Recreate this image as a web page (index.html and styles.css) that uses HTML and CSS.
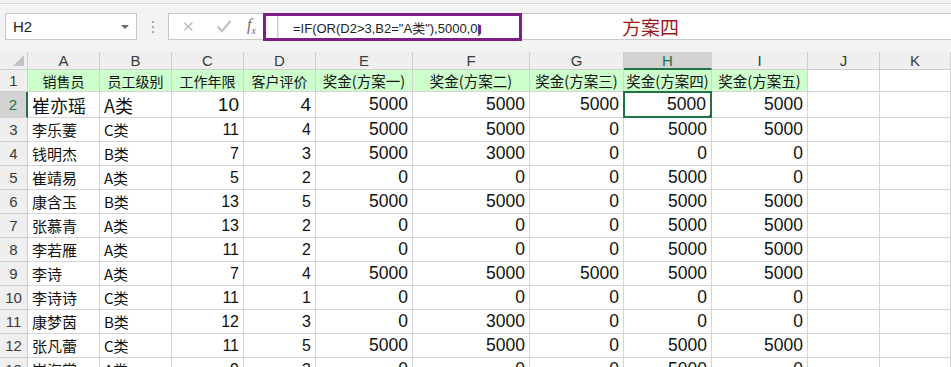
FILE: index.html
```html
<!DOCTYPE html>
<html lang="zh-CN">

<head>
	<meta charset="UTF-8">
	<title>奖金方案</title>
	<link rel="stylesheet" href="styles.css">
</head>

<body>

	<div class="toolbar">
		<div class="name-box">
			<span>H2</span>
			<i class="drop"></i>
		</div>
		<div class="grip"><i></i><i></i><i></i></div>
		<div class="fx-btns">
			<span class="btn">&#x2715;</span>
			<span class="btn">
				<svg width="16" height="14" viewBox="0 0 16 14"><path d="M1.5 7.5 L6 12 L14.5 2" fill="none" stroke="#bdbdbd" stroke-width="2"/></svg>
			</span>
			<span class="fx">f<sub>x</sub></span>
		</div>
		<div class="formula">
			<div class="formula-input">
				<span class="sep"></span>
				<span class="formula-text">=IF(OR(D2&gt;3,B2="A类"),5000,0)</span><span class="caret"></span>
			</div>
			<span class="note">方案四</span>
		</div>
	</div>

	<div class="sheet">
		<!-- 列标 -->
		<div class="hd corner"><i></i></div>
		<div class="hd">A</div>
		<div class="hd">B</div>
		<div class="hd">C</div>
		<div class="hd">D</div>
		<div class="hd">E</div>
		<div class="hd">F</div>
		<div class="hd">G</div>
		<div class="hd on">H</div>
		<div class="hd">I</div>
		<div class="hd">J</div>
		<div class="hd">K</div>

		<!-- 1 -->
		<div class="rh">1</div>
		<div class="c g ctr">销售员</div>
		<div class="c g ctr">员工级别</div>
		<div class="c g ctr">工作年限</div>
		<div class="c g ctr">客户评价</div>
		<div class="c g ctr wide">奖金(方案一)</div>
		<div class="c g ctr wide">奖金(方案二)</div>
		<div class="c g ctr wide">奖金(方案三)</div>
		<div class="c g ctr wide">奖金(方案四)</div>
		<div class="c g ctr wide">奖金(方案五)</div>
		<div class="c"></div>
		<div class="c"></div>

		<!-- 2 -->
		<div class="rh on">2</div>
		<div class="c big">崔亦瑶</div>
		<div class="c big">A类</div>
		<div class="c n big">10</div>
		<div class="c n big">4</div>
		<div class="c n m">5000</div>
		<div class="c n m">5000</div>
		<div class="c n m">5000</div>
		<div class="c n m sel">5000<i class="handle"></i></div>
		<div class="c n m">5000</div>
		<div class="c"></div>
		<div class="c"></div>

		<!-- 3 -->
		<div class="rh">3</div>
		<div class="c">李乐萋</div>
		<div class="c">C类</div>
		<div class="c n">11</div>
		<div class="c n">4</div>
		<div class="c n m">5000</div>
		<div class="c n m">5000</div>
		<div class="c n m">0</div>
		<div class="c n m">5000</div>
		<div class="c n m">5000</div>
		<div class="c"></div>
		<div class="c"></div>

		<!-- 4 -->
		<div class="rh">4</div>
		<div class="c">钱明杰</div>
		<div class="c">B类</div>
		<div class="c n">7</div>
		<div class="c n">3</div>
		<div class="c n m">5000</div>
		<div class="c n m">3000</div>
		<div class="c n m">0</div>
		<div class="c n m">0</div>
		<div class="c n m">0</div>
		<div class="c"></div>
		<div class="c"></div>

		<!-- 5 -->
		<div class="rh">5</div>
		<div class="c">崔靖易</div>
		<div class="c">A类</div>
		<div class="c n">5</div>
		<div class="c n">2</div>
		<div class="c n m">0</div>
		<div class="c n m">0</div>
		<div class="c n m">0</div>
		<div class="c n m">5000</div>
		<div class="c n m">0</div>
		<div class="c"></div>
		<div class="c"></div>

		<!-- 6 -->
		<div class="rh">6</div>
		<div class="c">康含玉</div>
		<div class="c">B类</div>
		<div class="c n">13</div>
		<div class="c n">5</div>
		<div class="c n m">5000</div>
		<div class="c n m">5000</div>
		<div class="c n m">0</div>
		<div class="c n m">5000</div>
		<div class="c n m">5000</div>
		<div class="c"></div>
		<div class="c"></div>

		<!-- 7 -->
		<div class="rh">7</div>
		<div class="c">张慕青</div>
		<div class="c">A类</div>
		<div class="c n">13</div>
		<div class="c n">2</div>
		<div class="c n m">0</div>
		<div class="c n m">0</div>
		<div class="c n m">0</div>
		<div class="c n m">5000</div>
		<div class="c n m">5000</div>
		<div class="c"></div>
		<div class="c"></div>

		<!-- 8 -->
		<div class="rh">8</div>
		<div class="c">李若雁</div>
		<div class="c">A类</div>
		<div class="c n">11</div>
		<div class="c n">2</div>
		<div class="c n m">0</div>
		<div class="c n m">0</div>
		<div class="c n m">0</div>
		<div class="c n m">5000</div>
		<div class="c n m">5000</div>
		<div class="c"></div>
		<div class="c"></div>

		<!-- 9 -->
		<div class="rh">9</div>
		<div class="c">李诗</div>
		<div class="c">A类</div>
		<div class="c n">7</div>
		<div class="c n">4</div>
		<div class="c n m">5000</div>
		<div class="c n m">5000</div>
		<div class="c n m">5000</div>
		<div class="c n m">5000</div>
		<div class="c n m">5000</div>
		<div class="c"></div>
		<div class="c"></div>

		<!-- 10 -->
		<div class="rh">10</div>
		<div class="c">李诗诗</div>
		<div class="c">C类</div>
		<div class="c n">11</div>
		<div class="c n">1</div>
		<div class="c n m">0</div>
		<div class="c n m">0</div>
		<div class="c n m">0</div>
		<div class="c n m">0</div>
		<div class="c n m">0</div>
		<div class="c"></div>
		<div class="c"></div>

		<!-- 11 -->
		<div class="rh">11</div>
		<div class="c">康梦茵</div>
		<div class="c">B类</div>
		<div class="c n">12</div>
		<div class="c n">3</div>
		<div class="c n m">0</div>
		<div class="c n m">3000</div>
		<div class="c n m">0</div>
		<div class="c n m">0</div>
		<div class="c n m">0</div>
		<div class="c"></div>
		<div class="c"></div>

		<!-- 12 -->
		<div class="rh">12</div>
		<div class="c">张凡蕾</div>
		<div class="c">C类</div>
		<div class="c n">11</div>
		<div class="c n">5</div>
		<div class="c n m">5000</div>
		<div class="c n m">5000</div>
		<div class="c n m">0</div>
		<div class="c n m">5000</div>
		<div class="c n m">5000</div>
		<div class="c"></div>
		<div class="c"></div>

		<!-- 13 -->
		<div class="rh">13</div>
		<div class="c">崔海棠</div>
		<div class="c">A类</div>
		<div class="c n">9</div>
		<div class="c n">3</div>
		<div class="c n m">0</div>
		<div class="c n m">0</div>
		<div class="c n m">0</div>
		<div class="c n m">5000</div>
		<div class="c n m">0</div>
		<div class="c"></div>
		<div class="c"></div>
	</div>

</body>

</html>
```

FILE: styles.css
```css
* {
	margin: 0;
	padding: 0;
	box-sizing: border-box;
}

body {
	height: 367px;
	overflow: hidden;
	background: #fff;
	font-family: "Liberation Sans", "Noto Sans CJK SC", sans-serif;
	color: #111;
}

/* 编辑栏 */
.toolbar {
	display: flex;
	height: 52px;
	padding: 10px 0 0 5px;
	background: #f3f3f3;
	border-top: 3px solid #f3f3f3;
	box-shadow: inset 0 1px 0 #d6d6d6;
}

.name-box {
	display: flex;
	align-items: center;
	justify-content: space-between;
	width: 132px;
	height: 27px;
	padding: 0 7px 0 7px;
	background: #fff;
	border: 1px solid #c8c8c8;
	font-size: 15px;
	color: #222;
}

.drop {
	width: 0;
	height: 0;
	border-left: 4px solid transparent;
	border-right: 4px solid transparent;
	border-top: 4px solid #6a6a6a;
}

.grip {
	display: flex;
	flex-direction: column;
	align-items: center;
	justify-content: center;
	gap: 3px;
	width: 31px;
	height: 27px;
}

.grip i {
	width: 2px;
	height: 2px;
	background: #a8a8a8;
}

.fx-btns {
	display: flex;
	align-items: center;
	width: 95px;
	height: 27px;
	background: #fff;
	border: 1px solid #c8c8c8;
	border-right: none;
}

.btn {
	width: 36px;
	text-align: center;
	font-size: 15px;
	color: #bdbdbd;
	line-height: 14px;
}

.btn:first-child {
	margin-left: 1px;
}

.fx {
	margin-left: 5px;
	font-family: "Liberation Serif", serif;
	font-style: italic;
	font-size: 16px;
	color: #6b6b6b;
}

.fx sub {
	font-size: 10px;
}

.formula {
	flex: 1;
	display: flex;
	align-items: center;
	height: 27px;
	background: #fff;
	border-top: 1px solid #c8c8c8;
	border-bottom: 1px solid #c8c8c8;
}

.formula-input {
	display: flex;
	align-items: center;
	width: 259px;
	height: 28px;
	margin-top: 1px;
	padding-left: 11px;
	border: 3px solid #7d1e84;
}

.sep {
	width: 2px;
	height: 22px;
	margin-right: 14px;
	border-left: 1px solid #d0d0d0;
	border-right: 1px solid #e6e6e6;
}

.formula-text {
	font-size: 13px;
	color: #222;
	white-space: nowrap;
}

.caret {
	width: 3px;
	height: 9px;
	margin: 5px 0 0 -4px;
	background: #6b2a80;
}

.note {
	margin-left: 100px;
	font-family: "Noto Sans CJK SC", sans-serif;
	font-size: 19px;
	color: #9a1d1d;
	line-height: 1;
}

/* 表格 */
.sheet {
	display: grid;
	grid-template-columns: 28px 72px 72px 72px 72px 97px 117px 94px 88px 96px 72px 1fr;
	grid-template-rows: 18px 22px 26px repeat(11, 24px);
}

.hd {
	display: flex;
	align-items: center;
	justify-content: center;
	background: #efefef;
	border-right: 1px solid #cfcfcf;
	border-bottom: 1px solid #cfcfcf;
	font-size: 15px;
	color: #3b3b3b;
}

.hd.on {
	background: #d3d3d3;
	color: #217346;
	border-bottom: 2px solid #217346;
}

.corner {
	position: relative;
	justify-content: flex-end;
	align-items: flex-end;
	padding: 0 3px 3px 0;
}

.corner i {
	width: 0;
	height: 0;
	border-left: 11px solid transparent;
	border-bottom: 11px solid #c3c3c3;
}

.rh {
	display: flex;
	align-items: center;
	justify-content: center;
	background: #efefef;
	border-right: 1px solid #cfcfcf;
	border-bottom: 1px solid #cfcfcf;
	font-size: 15px;
	color: #3b3b3b;
}

.rh.on {
	background: #d3d3d3;
	color: #217346;
	border-right: 2px solid #217346;
}

.c {
	display: flex;
	align-items: center;
	padding: 0 4px;
	border-right: 1px solid #d4d4d4;
	border-bottom: 1px solid #d4d4d4;
	font-family: "Noto Sans CJK SC", sans-serif;
	font-size: 15px;
	white-space: nowrap;
	overflow: hidden;
}

.g {
	background: #ccffcc;
	font-size: 14px;
}

.g.wide {
	font-size: 14.5px;
}

.ctr {
	justify-content: center;
}

.n {
	justify-content: flex-end;
	padding-right: 4px;
	font-family: "Liberation Sans", sans-serif;
	font-size: 16px;
}

.m {
	font-size: 17.5px;
}

.big {
	font-size: 18px;
}

.n.big {
	font-size: 19px;
}

.sel {
	position: relative;
	border: 2px solid #217346;
	margin: -1px 0 0 -1px;
}

.handle {
	position: absolute;
	right: -4px;
	bottom: -4px;
	width: 6px;
	height: 6px;
	background: #217346;
	border: 1px solid #fff;
}
```
